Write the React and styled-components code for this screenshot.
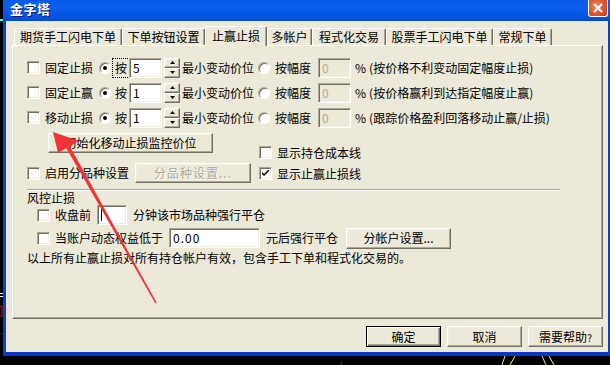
import React from 'react';
import styled, { createGlobalStyle, css } from 'styled-components';

const GlobalStyle = createGlobalStyle`
  html, body {
    margin: 0;
    padding: 0;
    background: #000;
  }
  body {
    font-family: "Noto Sans CJK SC", "Liberation Sans", sans-serif;
    font-size: 12px;
    color: #000;
  }
`;

const tabs = [
    { name: '期货手工闪电下单', w: 108 },
    { name: '下单按钮设置', w: 83 },
    { name: '止赢止损', w: 62, active: true },
    { name: '多帐户', w: 45 },
    { name: '程式化交易', w: 74 },
    { name: '股票手工闪电下单', w: 107 },
    { name: '常规下单', w: 59 },
];

const stopRows = [
    { label: '固定止损', ticks: '5', note: '(按价格不利变动固定幅度止损)', focused: true },
    { label: '固定止赢', ticks: '1', note: '(按价格赢利到达指定幅度止赢)' },
    { label: '移动止损', ticks: '1', note: '(跟踪价格盈利回落移动止赢/止损)' },
];

const sunken = css`
    box-sizing: border-box;
    border: 1px solid;
    border-color: #aca899 #fff #fff #aca899;
    box-shadow: inset 1px 1px #716f64, inset -1px -1px #f1efe2;
`;

const raised = css`
    box-sizing: border-box;
    border: 1px solid;
    border-color: #fff #716f64 #716f64 #fff;
    box-shadow: inset -1px -1px #aca899, inset 1px 1px #f1efe2;
`;

const CheckBox = ({ checked }) => (
    <Check>
        {checked && (
            <svg width="7" height="7" viewBox="0 0 7 7">
                <path d="M0 2 L0 4 L2 6 L7 1 L7 -1 L2 4 Z" fill="#000" />
            </svg>
        )}
    </Check>
);

const SpinBox = () => (
    <Spinner>
        <SpinButton>
            <svg width="5" height="3" viewBox="0 0 5 3"><path d="M2.5 0 L5 3 L0 3 Z" fill="#000" /></svg>
        </SpinButton>
        <SpinButton>
            <svg width="5" height="3" viewBox="0 0 5 3"><path d="M0 0 L5 0 L2.5 3 Z" fill="#000" /></svg>
        </SpinButton>
    </Spinner>
);

export default () => (
    <Screen>
        <GlobalStyle />
        <LeftStrip width="3" height="356" viewBox="0 0 3 356">
            <rect x="0" y="19" width="3" height="2" fill="#3ff" />
            <rect x="0" y="293" width="3" height="1" fill="#fff" />
            <rect x="0" y="296" width="3" height="1" fill="#fff" />
            <path d="M0 306 H2 V316 H0" stroke="#e00" fill="none" />
            <rect x="1" y="333" width="1" height="1" fill="#e00" />
        </LeftStrip>
        <Window>
            <TitleBar>
                <Title>金字塔</Title>
                <CloseButton>
                    <svg width="10" height="10" viewBox="0 0 10 10">
                        <path d="M1 1 L9 9 M9 1 L1 9" stroke="#fff" strokeWidth="2.2" />
                    </svg>
                </CloseButton>
            </TitleBar>
            <Frame>
                <TabStrip>
                    {tabs.map(t => (
                        <Tab key={t.name} w={t.w} active={t.active}>{t.name}</Tab>
                    ))}
                </TabStrip>
                <Panel>
                    {stopRows.map(r => (
                        <OptionRow key={r.label}>
                            <CheckBox />
                            <Text ml={5} w={48}>{r.label}</Text>
                            <Radio ml={6} on />
                            <Text ml={4} focused={r.focused}>按</Text>
                            <Field ml={2} w={33}>{r.ticks}</Field>
                            <SpinBox />
                            <Text ml={2}>最小变动价位</Text>
                            <Radio ml={4} />
                            <Text ml={5}>按幅度</Text>
                            <Field ml={7} w={33} disabled>0</Field>
                            <Text ml={4}>%</Text>
                            <Text ml={3}>{r.note}</Text>
                        </OptionRow>
                    ))}
                    <MiddleBlock>
                        <LeftCol>
                            <Button ml={21} w={165}>初始化移动止损监控价位</Button>
                            <LineRow>
                                <CheckBox />
                                <Text ml={5}>启用分品种设置</Text>
                                <Button ml={6} w={116} disabled>分品种设置...</Button>
                            </LineRow>
                        </LeftCol>
                        <RightCol>
                            <SmallRow>
                                <CheckBox />
                                <Text ml={5}>显示持仓成本线</Text>
                            </SmallRow>
                            <SmallRow>
                                <CheckBox checked />
                                <Text ml={5}>显示止赢止损线</Text>
                            </SmallRow>
                        </RightCol>
                    </MiddleBlock>
                    <Separator />
                    <GroupLabel>风控止损</GroupLabel>
                    <RiskRow h={22}>
                        <CheckBox />
                        <Text ml={5}>收盘前</Text>
                        <Field ml={6} w={30}><Caret /></Field>
                        <Text ml={6}>分钟该市场品种强行平仓</Text>
                    </RiskRow>
                    <RiskRow h={24}>
                        <CheckBox />
                        <Text ml={5}>当账户动态权益低于</Text>
                        <Field ml={6} w={91} mono>0.00</Field>
                        <Text ml={6}>元后强行平仓</Text>
                        <Button ml={8} w={105} h={21}>分帐户设置...</Button>
                    </RiskRow>
                    <Footnote>以上所有止赢止损对所有持仓帐户有效，包含手工下单和程式化交易的。</Footnote>
                </Panel>
                <ButtonBar>
                    <Button w={75} h={21} primary>确定</Button>
                    <Button w={75} h={21}>取消</Button>
                    <Button w={75} h={21}>需要帮助<Small>?</Small></Button>
                </ButtonBar>
            </Frame>
        </Window>
        <BottomStrip width="610" height="9" viewBox="0 0 610 9">
            <rect x="341" y="6" width="1" height="3" fill="#e00" />
            <path d="M502 9 L505 0" stroke="#ddd" strokeWidth="1" />
            <path d="M510 9 L515 0" stroke="#ff0" strokeWidth="1" />
            <path d="M542 0 L546 9" stroke="#ddd" strokeWidth="1" />
            <path d="M549 0 L554 9" stroke="#ff0" strokeWidth="1" />
        </BottomStrip>
        <Annotation width="610" height="365" viewBox="0 0 610 365">
            <polygon points="53,132 79,141 58,153" fill="#ee3434" />
            <polygon points="69.7,146 156.6,302.6 155.4,303.4 66.3,148" fill="#ee3434" />
        </Annotation>
    </Screen>
);

const Screen = styled.div`
    position: relative;
    width: 610px;
    height: 365px;
    overflow: hidden;
    background: #000;
    display: grid;
    grid-template-columns: 3px 607px;
    grid-template-rows: 356px 9px;
`;

const LeftStrip = styled.svg`
    display: block;
`;

const BottomStrip = styled.svg`
    display: block;
    grid-column: 1 / span 2;
`;

const Annotation = styled.svg`
    position: absolute;
    left: 0;
    top: 0;
    pointer-events: none;
`;

const Window = styled.div`
    display: flex;
    flex-direction: column;
    min-height: 0;
`;

const TitleBar = styled.div`
    height: 21px;
    flex: none;
    display: flex;
    justify-content: space-between;
    align-items: flex-start;
    padding: 0 2px 0 7px;
    background: linear-gradient(180deg, #0a5ae8 0%, #0b5fee 30%, #0758e6 60%, #0552dc 85%, #0348cc 100%);
`;

const Title = styled.div`
    color: #fff;
    font-weight: bold;
    font-size: 13px;
    line-height: 15px;
    padding-top: 1px;
    text-shadow: 1px 1px #0a1e80;
    letter-spacing: 0.5px;
`;

const CloseButton = styled.div`
    width: 20px;
    height: 17px;
    box-sizing: border-box;
    display: flex;
    align-items: center;
    justify-content: center;
    border: 1px solid #fff;
    border-top: none;
    border-radius: 0 0 3px 3px;
    background: radial-gradient(circle at 40% 35%, #f08a6a 0%, #e2582f 45%, #c83c1a 100%);
`;

const Frame = styled.div`
    flex: 1;
    min-height: 0;
    background: #ece9d8;
    border-left: 3px solid #0a3fd8;
    border-right: 2px solid #0a3fd8;
    border-bottom: 4px solid #0a36c8;
    padding: 5px 0 0 6px;
    display: flex;
    flex-direction: column;
`;

const TabStrip = styled.div`
    height: 19px;
    display: flex;
    align-items: flex-end;
    padding-left: 2px;
    position: relative;
    z-index: 1;
`;

const Tab = styled.div`
    box-sizing: border-box;
    width: ${p => p.w}px;
    height: ${p => (p.active ? 20 : 17)}px;
    margin-bottom: ${p => (p.active ? -1 : 0)}px;
    display: flex;
    align-items: center;
    justify-content: center;
    line-height: 14px;
    padding-bottom: ${p => (p.active ? 2 : 0)}px;
    background: #ece9d8;
    border: 1px solid;
    border-bottom: none;
    border-color: #fff #716f64 transparent #fff;
    box-shadow: inset -1px 0 #aca899;
    border-radius: 2px 2px 0 0;
    white-space: nowrap;
`;

const Panel = styled.div`
    box-sizing: border-box;
    width: 591px;
    height: 274px;
    flex: none;
    padding: 9px 0 0 14px;
    border: 1px solid;
    border-color: #fff #716f64 #716f64 #fff;
    box-shadow: inset -1px -1px #aca899;
    display: flex;
    flex-direction: column;
`;

const OptionRow = styled.div`
    height: 25px;
    display: flex;
    align-items: center;
`;

const Text = styled.span`
    margin-left: ${p => p.ml || 0}px;
    width: ${p => (p.w ? `${p.w}px` : 'auto')};
    line-height: 14px;
    white-space: nowrap;
    outline: ${p => (p.focused ? '1px dotted #000' : 'none')};
    outline-offset: 2px;
`;

const Check = styled.span`
    ${sunken};
    width: 13px;
    height: 13px;
    flex: none;
    background: #fff;
    display: flex;
    align-items: center;
    justify-content: center;
`;

const Radio = styled.span`
    box-sizing: border-box;
    width: 12px;
    height: 12px;
    flex: none;
    margin-left: ${p => p.ml || 0}px;
    border-radius: 50%;
    background: #fff;
    border: 1px solid;
    border-color: #aca899 #fff #fff #aca899;
    box-shadow: inset 1px 1px #716f64;
    display: flex;
    align-items: center;
    justify-content: center;

    &::after {
        content: '';
        display: ${p => (p.on ? 'block' : 'none')};
        width: 4px;
        height: 4px;
        border-radius: 50%;
        background: #000;
    }
`;

const Field = styled.div`
    ${sunken};
    width: ${p => p.w}px;
    height: 20px;
    flex: none;
    margin-left: ${p => p.ml || 0}px;
    padding: 0 3px;
    display: flex;
    align-items: center;
    line-height: 14px;
    background: ${p => (p.disabled ? '#ece9d8' : '#fff')};
    color: ${p => (p.disabled ? '#aca899' : '#000')};
    letter-spacing: ${p => (p.mono ? '1px' : '0')};
`;

const Caret = styled.span`
    width: 1px;
    height: 12px;
    background: #000;
`;

const Spinner = styled.div`
    width: 16px;
    height: 20px;
    flex: none;
    margin-left: 2px;
    display: flex;
    flex-direction: column;
`;

const SpinButton = styled.div`
    ${raised};
    height: 10px;
    background: #ece9d8;
    display: flex;
    align-items: center;
    justify-content: center;
`;

const Button = styled.div`
    box-sizing: border-box;
    width: ${p => p.w}px;
    height: ${p => p.h || 20}px;
    flex: none;
    margin-left: ${p => p.ml || 0}px;
    display: flex;
    align-items: center;
    justify-content: center;
    line-height: 14px;
    white-space: nowrap;
    background: #ece9d8;
    color: ${p => (p.disabled ? '#aca899' : '#000')};
    text-shadow: ${p => (p.disabled ? '1px 1px #fff' : 'none')};
    letter-spacing: ${p => (p.disabled ? '1px' : '0')};
    border: 1px solid;
    ${p => (p.primary
        ? css`
            border-color: #000;
            box-shadow: inset 1px 1px #fff, inset -1px -1px #716f64, inset -2px -2px #aca899;
        `
        : css`
            border-color: #fff #716f64 #716f64 #fff;
            box-shadow: inset -1px -1px #aca899, inset 1px 1px #f1efe2;
        `)}
`;

const Small = styled.span`
    font-size: 10px;
    margin-top: 2px;
`;

const MiddleBlock = styled.div`
    display: flex;
    margin-top: 3px;
`;

const LeftCol = styled.div`
    width: 232px;
    display: flex;
    flex-direction: column;
    gap: 10px;
`;

const LineRow = styled.div`
    height: 20px;
    display: flex;
    align-items: center;
`;

const RightCol = styled.div`
    padding-top: 9px;
    display: flex;
    flex-direction: column;
`;

const SmallRow = styled.div`
    height: 21px;
    display: flex;
    align-items: center;
`;

const Separator = styled.div`
    width: 533px;
    height: 1px;
    margin-top: 5px;
    background: #aca899;
    border-bottom: 1px solid #fff;
`;

const GroupLabel = styled.div`
    height: 13px;
    line-height: 14px;
    display: flex;
    align-items: center;
`;

const RiskRow = styled.div`
    height: ${p => p.h}px;
    padding-left: 10px;
    display: flex;
    align-items: center;
`;

const Footnote = styled.div`
    height: 15px;
    line-height: 14px;
    display: flex;
    align-items: center;
    white-space: nowrap;
`;

const ButtonBar = styled.div`
    width: 591px;
    margin-top: 7px;
    display: flex;
    justify-content: flex-end;
    gap: 6px;
`;
